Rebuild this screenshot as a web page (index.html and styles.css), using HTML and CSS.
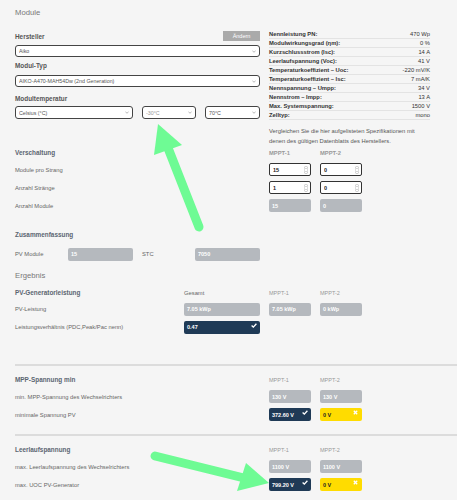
FILE: index.html
```html
<!DOCTYPE html>
<html lang="de">
<head>
    <meta charset="UTF-8">
    <meta name="viewport" content="width=device-width, initial-scale=1.0">
    <title>PV-Auslegung</title>
    <link rel="stylesheet" href="styles.css">
</head>
<body>
    <div class="page">
        <h1 class="block-title">Module</h1>

        <div class="module-top">
            <div class="module-form">
                <div class="field-head">
                    <label>Hersteller</label>
                    <button class="edit-btn">Ändern</button>
                </div>
                <div class="select-wrap">
                    <select><option>Aiko</option></select>
                    <svg viewBox="0 0 4 3"><path d="M0.4 0.6 L2 2.3 L3.6 0.6"/></svg>
                </div>
                <label class="field-label">Modul-Typ</label>
                <div class="select-wrap">
                    <select><option>AIKO-A470-MAH54Dw (2nd Generation)</option></select>
                    <svg viewBox="0 0 4 3"><path d="M0.4 0.6 L2 2.3 L3.6 0.6"/></svg>
                </div>
                <label class="field-label temp-label">Modultemperatur</label>
                <div class="temp-row">
                    <div class="select-wrap">
                        <select><option>Celsius (°C)</option></select>
                        <svg viewBox="0 0 4 3"><path d="M0.4 0.6 L2 2.3 L3.6 0.6"/></svg>
                    </div>
                    <div class="select-wrap">
                        <select class="muted"><option>-30°C</option></select>
                        <svg viewBox="0 0 4 3"><path d="M0.4 0.6 L2 2.3 L3.6 0.6"/></svg>
                    </div>
                    <div class="select-wrap">
                        <select><option>70°C</option></select>
                        <svg viewBox="0 0 4 3"><path d="M0.4 0.6 L2 2.3 L3.6 0.6"/></svg>
                    </div>
                </div>
            </div>

            <div class="module-specs">
                <table class="spec-table">
                    <tr><th>Nennleistung PN:</th><td>470 Wp</td></tr>
                    <tr><th>Modulwirkungsgrad (ηm):</th><td>0 %</td></tr>
                    <tr><th>Kurzschlussstrom (Isc):</th><td>14 A</td></tr>
                    <tr><th>Leerlaufspannung (Voc):</th><td>41 V</td></tr>
                    <tr><th>Temperaturkoeffizient – Uoc:</th><td>-220 mV/K</td></tr>
                    <tr><th>Temperaturkoeffizient – Isc:</th><td>7 mA/K</td></tr>
                    <tr><th>Nennspannung – Umpp:</th><td>34 V</td></tr>
                    <tr><th>Nennstrom – Impp:</th><td>13 A</td></tr>
                    <tr><th>Max. Systemspannung:</th><td>1500 V</td></tr>
                    <tr><th>Zelltyp:</th><td>mono</td></tr>
                </table>
                <p class="spec-note">Vergleichen Sie die hier aufgelisteten Spezifikationen mit<br>denen des gültigen Datenblatts des Herstellers.</p>
            </div>
        </div>

        <!-- Verschaltung -->
        <div class="group wiring">
            <div class="row head">
                <span class="group-title">Verschaltung</span>
                <span class="col-head strong">MPPT-1</span>
                <span class="col-head strong">MPPT-2</span>
            </div>
            <div class="row">
                <span class="row-label">Module pro Strang</span>
                <div class="num"><input type="text" value="15"><svg viewBox="0 0 4 8"><rect x="0.3" y="0.3" width="3.4" height="7.4" rx="1.7"/><path d="M1.1 3 L2 2 L2.9 3 M1.1 5 L2 6 L2.9 5"/></svg></div>
                <div class="num"><input type="text" value="0"><svg viewBox="0 0 4 8"><rect x="0.3" y="0.3" width="3.4" height="7.4" rx="1.7"/><path d="M1.1 3 L2 2 L2.9 3 M1.1 5 L2 6 L2.9 5"/></svg></div>
            </div>
            <div class="row">
                <span class="row-label">Anzahl Stränge</span>
                <div class="num"><input type="text" value="1"><svg viewBox="0 0 4 8"><rect x="0.3" y="0.3" width="3.4" height="7.4" rx="1.7"/><path d="M1.1 3 L2 2 L2.9 3 M1.1 5 L2 6 L2.9 5"/></svg></div>
                <div class="num"><input type="text" value="0"><svg viewBox="0 0 4 8"><rect x="0.3" y="0.3" width="3.4" height="7.4" rx="1.7"/><path d="M1.1 3 L2 2 L2.9 3 M1.1 5 L2 6 L2.9 5"/></svg></div>
            </div>
            <div class="row">
                <span class="row-label">Anzahl Module</span>
                <div class="val">15</div>
                <div class="val">0</div>
            </div>
        </div>

        <!-- Zusammenfassung -->
        <div class="group summary">
            <div class="group-title">Zusammenfassung</div>
            <div class="summary-row">
                <span class="row-label">PV Module</span>
                <div class="val">15</div>
                <span class="row-label stc">STC</span>
                <div class="val">7050</div>
            </div>
        </div>

        <h2 class="block-title result-title">Ergebnis</h2>

        <div class="group power">
            <div class="result-row head">
                <span class="group-title">PV-Generatorleistung</span>
                <span class="total-head">Gesamt</span>
                <span class="col-head">MPPT-1</span>
                <span class="col-head">MPPT-2</span>
            </div>
            <div class="result-row">
                <span class="row-label">PV-Leistung</span>
                <div class="val">7.05 kWp</div>
                <div class="val">7.05 kWp</div>
                <div class="val">0 kWp</div>
            </div>
            <div class="result-row">
                <span class="row-label">Leistungsverhältnis (PDC,Peak/Pac nenn)</span>
                <div class="val ok">0.47<svg viewBox="0 0 6 5"><path d="M0.6 2.6 L2.3 4.1 L5.4 0.7"/></svg></div>
            </div>
        </div>

        <hr class="divider first">

        <div class="group">
            <div class="row head">
                <span class="group-title">MPP-Spannung min</span>
                <span class="col-head">MPPT-1</span>
                <span class="col-head">MPPT-2</span>
            </div>
            <div class="row">
                <span class="row-label">min. MPP-Spannung des Wechselrichters</span>
                <div class="val">130 V</div>
                <div class="val">130 V</div>
            </div>
            <div class="row">
                <span class="row-label">minimale Spannung PV</span>
                <div class="val ok">372.60 V<svg viewBox="0 0 6 5"><path d="M0.6 2.6 L2.3 4.1 L5.4 0.7"/></svg></div>
                <div class="val bad">0 V<svg viewBox="0 0 5 5"><path d="M0.8 0.8 L4.2 4.2 M4.2 0.8 L0.8 4.2"/></svg></div>
            </div>
        </div>

        <hr class="divider">

        <div class="group">
            <div class="row head">
                <span class="group-title">Leerlaufspannung</span>
                <span class="col-head">MPPT-1</span>
                <span class="col-head">MPPT-2</span>
            </div>
            <div class="row">
                <span class="row-label">max. Leerlaufspannung des Wechselrichters</span>
                <div class="val">1100 V</div>
                <div class="val">1100 V</div>
            </div>
            <div class="row">
                <span class="row-label">max. UOC PV-Generator</span>
                <div class="val ok">799.20 V<svg viewBox="0 0 6 5"><path d="M0.6 2.6 L2.3 4.1 L5.4 0.7"/></svg></div>
                <div class="val bad">0 V<svg viewBox="0 0 5 5"><path d="M0.8 0.8 L4.2 4.2 M4.2 0.8 L0.8 4.2"/></svg></div>
            </div>
        </div>
    </div>

    <!-- hint arrows drawn on top of the form -->
    <svg class="hints" viewBox="0 0 457 500">
        <line x1="199" y1="227" x2="168" y2="148"/>
        <polygon points="158,124 154,155 182,145"/>
        <line x1="155" y1="456" x2="244" y2="478"/>
        <polygon points="269,483 246,463 237,491"/>
    </svg>
</body>
</html>
```

FILE: styles.css
```css
* {
    box-sizing: border-box;
}
body {
    margin: 0;
    background: #f5f5f5;
    font-family: "Liberation Sans", Arial, sans-serif;
    font-size: 6px;
    color: #555;
}
.page {
    padding: 8px 0 0 15px;
}
.block-title {
    margin: 0;
    font-size: 7.7px;
    font-weight: normal;
    line-height: 10px;
    color: #777;
}

/* module selection + data sheet */
.module-top {
    display: grid;
    grid-template-columns: 245px 161px;
    column-gap: 9px;
    margin-top: 11px;
}
label {
    font-size: 6.4px;
    font-weight: bold;
    color: #555;
}
.field-head {
    display: flex;
    justify-content: space-between;
    align-items: center;
    height: 10px;
    margin-top: 2px;
}
.field-label {
    display: block;
    line-height: 10px;
    margin-top: 4px;
}
.temp-label {
    margin-top: 7px;
}
.edit-btn {
    width: 37px;
    height: 10px;
    padding: 0;
    border: none;
    background: #aaa;
    color: #fff;
    font-family: "Liberation Sans", Arial, sans-serif;
    font-size: 5.5px;
}
.select-wrap {
    position: relative;
    margin-top: 4px;
}
.select-wrap select {
    appearance: none;
    display: block;
    width: 100%;
    height: 12px;
    padding: 0 0 0 3px;
    border: 1px solid #444;
    border-radius: 3px;
    background: #fff;
    font-family: "Liberation Sans", Arial, sans-serif;
    font-size: 5.3px;
    color: #555;
}
.select-wrap select.muted {
    color: #999;
}
.select-wrap svg {
    position: absolute;
    right: 4px;
    top: 5px;
    width: 4px;
    height: 3px;
    fill: none;
    stroke: #999;
    stroke-width: 0.7;
}
.temp-row {
    display: grid;
    grid-template-columns: 118px 54px 55px;
    column-gap: 9px;
    margin-top: 2px;
}
.temp-row .select-wrap {
    margin-top: 0;
}
.temp-row select {
    height: 13px;
}

.spec-table {
    width: 161px;
    border-collapse: collapse;
    margin-top: 0.5px;
}
.spec-table th,
.spec-table td {
    height: 9px;
    padding: 0;
    border-bottom: 1px solid #e3e3e3;
    font-size: 5.8px;
    color: #333;
}
.spec-table th {
    text-align: left;
    font-weight: bold;
}
.spec-table td {
    text-align: right;
}
.spec-note {
    margin: 6px 0 0;
    font-size: 5.8px;
    line-height: 10px;
    color: #555;
}

/* form groups */
.group-title {
    font-size: 6.4px;
    font-weight: bold;
    line-height: 10px;
    color: #5b6571;
}
.row-label {
    font-size: 5.8px;
    color: #666;
    white-space: nowrap;
}
.col-head {
    font-size: 5.5px;
    color: #999;
}
.col-head.strong {
    font-weight: bold;
    font-size: 5.8px;
}
.row {
    display: grid;
    grid-template-columns: 245px 42px 42px;
    column-gap: 9px;
    align-items: center;
    height: 13px;
    margin-top: 5px;
}
.row.head {
    height: 10px;
}
.wiring {
    margin-top: 2px;
}
.wiring .row.head {
    margin-top: 0;
    margin-bottom: 2.5px;
}
.num {
    position: relative;
    height: 13px;
}
.num input {
    width: 100%;
    height: 13px;
    padding: 0 0 0 3px;
    border: 1px solid #333;
    border-radius: 2px;
    background: #fff;
    font-family: "Liberation Sans", Arial, sans-serif;
    font-size: 5.5px;
    font-weight: bold;
    color: #222;
}
.num svg {
    position: absolute;
    right: 3px;
    top: 2.5px;
    width: 4px;
    height: 8px;
    fill: none;
    stroke: #aaa;
    stroke-width: 0.5;
}
.val {
    display: flex;
    align-items: center;
    justify-content: space-between;
    height: 13px;
    padding: 0 3px;
    border-radius: 2px;
    background: #b5b9be;
    color: #fff;
    font-size: 5.5px;
    font-weight: bold;
}
.val svg {
    width: 6px;
    height: 5px;
    align-self: flex-start;
    margin-top: 2px;
    fill: none;
    stroke: #fff;
    stroke-width: 1.3;
}
.val.ok {
    background: #1f3a56;
}
.val.bad {
    background: #ffdc00;
    color: #222;
}
.val.bad svg {
    width: 5px;
    height: 5px;
    margin-right: 1px;
    stroke-width: 1.3;
}

.summary {
    margin-top: 17.5px;
}
.summary-row {
    display: grid;
    grid-template-columns: 44px 65px 44px 65px;
    column-gap: 9px;
    align-items: center;
    height: 13px;
    margin-top: 8px;
}
.result-title {
    margin-top: 9px;
    line-height: 12px;
}
.power {
    margin-top: 6px;
}
.result-row {
    display: grid;
    grid-template-columns: 160px 76px 42px 42px;
    column-gap: 9px;
    align-items: center;
    height: 13px;
    margin-top: 5px;
}
.result-row.head {
    height: 10px;
    margin-top: 0;
}
.total-head {
    font-size: 5.8px;
    color: #666;
}

.divider {
    height: 0;
    margin: 13px 0 0;
    border: none;
    border-top: 2px solid #dcdcdc;
}
.divider.first {
    margin-top: 30.5px;
}
.divider + .group {
    margin-top: 9px;
}
.divider + .group .row.head {
    margin-top: 0;
}

/* hint arrows */
.hints {
    position: absolute;
    top: 0;
    left: 0;
    width: 457px;
    height: 500px;
    pointer-events: none;
}
.hints line {
    stroke: #6efb94;
    stroke-width: 9;
    stroke-linecap: round;
}
.hints polygon {
    fill: #6efb94;
}
```
